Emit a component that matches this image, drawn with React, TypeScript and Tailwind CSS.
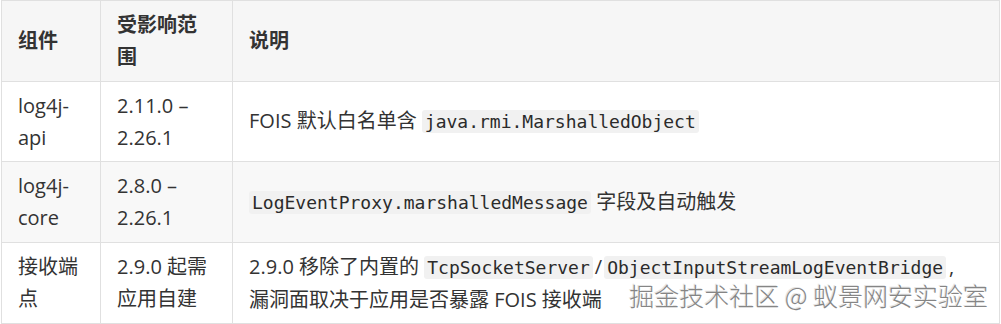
import React from "react";

const body = "font-['Open_Sans','Noto_Sans_CJK_SC',sans-serif]";

function Code({ children }: { children: React.ReactNode }) {
  return (
    <code className="rounded-[3px] bg-[#f1f1f1] px-[3px] py-px font-['DejaVu_Sans_Mono',monospace] text-[18px] text-[#2b2b2b]">
      {children}
    </code>
  );
}

const cell = "border border-[#e0e0e0] px-4 pt-2 pb-[7.5px] align-middle";

export default function App() {
  return (
    <div className={`relative h-[324px] w-[1001px] bg-white ${body}`}>
      <table className="ml-px w-[999px] table-fixed border-collapse text-[20px] leading-[32px] text-[#333]">
        <colgroup>
          <col className="w-[99px]" />
          <col className="w-[132px]" />
          <col />
        </colgroup>
        <thead>
          <tr className="bg-[#f6f6f6] text-left font-bold">
            <th className={cell}>组件</th>
            <th className={cell}>受影响范围</th>
            <th className={cell}>说明</th>
          </tr>
        </thead>
        <tbody>
          <tr className="bg-white">
            <td className={cell}>log4j-api</td>
            <td className={cell}>2.11.0 – 2.26.1</td>
            <td className={cell}>
              FOIS 默认白名单含 <Code>java.rmi.MarshalledObject</Code>
            </td>
          </tr>
          <tr className="bg-[#f8f8f8]">
            <td className={cell}>log4j-core</td>
            <td className={cell}>2.8.0 – 2.26.1</td>
            <td className={cell}>
              <Code>LogEventProxy.marshalledMessage</Code> 字段及自动触发
            </td>
          </tr>
          <tr className="bg-white">
            <td className={cell}>接收端点</td>
            <td className={cell}>2.9.0 起需应用自建</td>
            <td className={cell}>
              2.9.0 移除了内置的 <Code>TcpSocketServer</Code>
              <span className="mx-[2px]">/</span>
              <Code>ObjectInputStreamLogEventBridge</Code>
              <span className="ml-[3px]">,</span>
              <br />
              漏洞面取决于应用是否暴露 FOIS 接收端
            </td>
          </tr>
        </tbody>
      </table>

      <div className="pointer-events-none absolute bottom-[14px] right-[13px] font-['Noto_Sans_CJK_SC',sans-serif] text-[25px] leading-[30px] font-light text-[#858585] [text-shadow:1px_1px_0_#ffffff,-1px_-1px_0_#e4e4e4]">
        掘金技术社区 @ 蚁景网安实验室
      </div>
    </div>
  );
}
